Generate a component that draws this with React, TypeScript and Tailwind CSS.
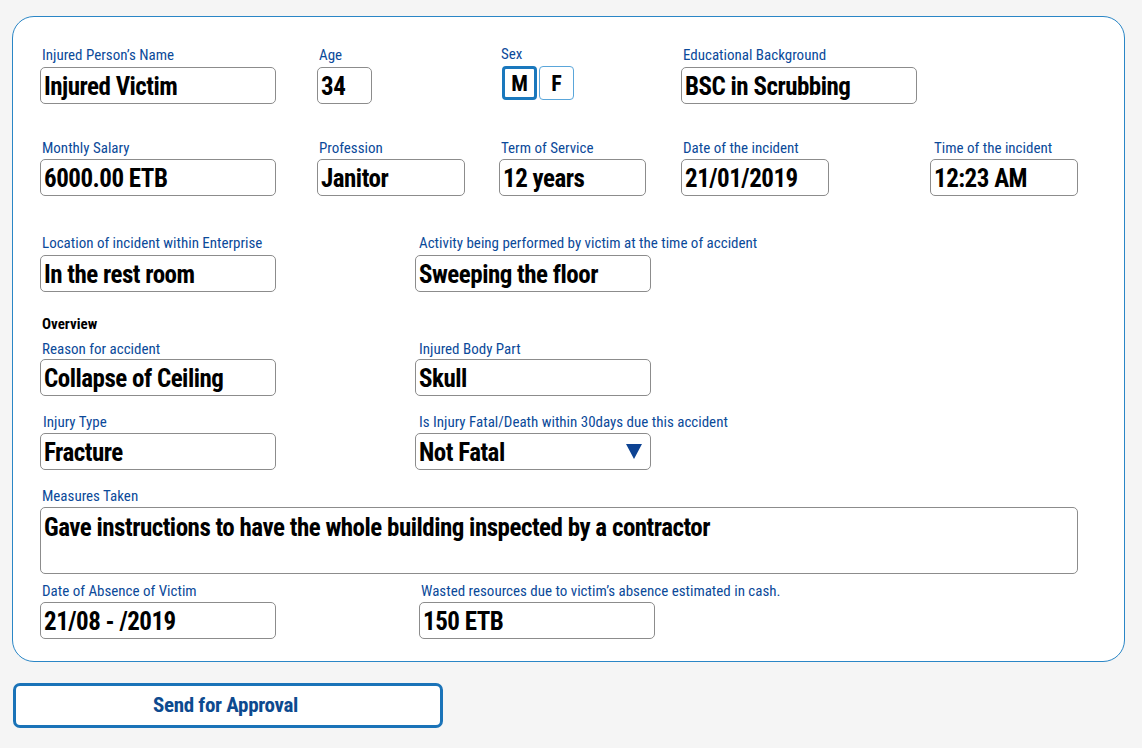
import React from 'react';

interface FieldProps {
    label: string;
    value: string;
    width: string;
    labelClass?: string;
    children?: React.ReactNode;
}

const Label: React.FC<{ text: string; className?: string }> = ({ text, className = '' }) => (
    <div className={`text-[15px] leading-[18px] text-[#0b4a9a] whitespace-nowrap ${className}`}>{text}</div>
);

const Field: React.FC<FieldProps> = ({ label, value, width, labelClass = 'mb-[3px] pl-[2px]', children }) => (
    <div className="flex flex-col">
        <Label text={label} className={labelClass} />
        <div
            className={`${width} h-[37px] border border-[#8c8c8c] rounded-[5px] bg-white flex items-center justify-between pl-[3px] pr-[8px] pt-[3px] text-[25px] tracking-[-0.5px] font-bold text-black whitespace-nowrap`}
        >
            <span>{value}</span>
            {children}
        </div>
    </div>
);

export default function App() {
    return (
        <div className="min-h-[748px] bg-[#f5f5f5] pt-[16px] px-[12px] font-['Roboto',sans-serif] font-stretch-condensed">
            {/* Form card */}
            <div className="w-[1113px] bg-white border border-[#2a86c6] rounded-[22px] pt-[29px] pb-[22px] pl-[27px]">
                {/* Row 1 */}
                <div className="grid grid-cols-[277px_182px_182px_249px_1fr] items-start">
                    <Field label="Injured Person’s Name" value="Injured Victim" width="w-[236px]" />
                    <Field label="Age" value="34" width="w-[55px]" />
                    <div className="flex flex-col">
                        <Label text="Sex" className="mb-[3px] -mt-[1px] pl-[2px]" />
                        <div className="flex gap-[2px] pl-[3px]">
                            <div className="w-[35px] h-[34px] border-[3px] border-[#1a78bd] rounded-[4px] flex items-center justify-center text-[22px] font-bold">M</div>
                            <div className="w-[35px] h-[34px] border border-[#5aa6da] rounded-[4px] flex items-center justify-center text-[22px] font-bold">F</div>
                        </div>
                    </div>
                    <Field label="Educational Background" value="BSC in Scrubbing" width="w-[236px]" />
                </div>

                {/* Row 2 */}
                <div className="grid grid-cols-[277px_182px_182px_249px_1fr] items-start mt-[35px]">
                    <Field label="Monthly Salary" value="6000.00 ETB" width="w-[236px]" labelClass="mb-[2px] pl-[2px]" />
                    <Field label="Profession" value="Janitor" width="w-[148px]" labelClass="mb-[2px] pl-[2px]" />
                    <Field label="Term of Service" value="12 years" width="w-[147px]" labelClass="mb-[2px] pl-[2px]" />
                    <Field label="Date of the incident" value="21/01/2019" width="w-[148px]" labelClass="mb-[2px] pl-[2px]" />
                    <Field label="Time of the incident" value="12:23 AM" width="w-[148px]" labelClass="mb-[2px] pl-[4px]" />
                </div>

                {/* Row 3 */}
                <div className="grid grid-cols-[375px_1fr] items-start mt-[38px]">
                    <Field label="Location of incident within Enterprise" value="In the rest room" width="w-[236px]" labelClass="mb-[3px] pl-[2px]" />
                    <Field label="Activity being performed by victim at the time of accident" value="Sweeping the floor" width="w-[236px]" labelClass="mb-[3px] pl-[4px]" />
                </div>

                <div className="mt-[23px] pl-[2px] text-[15px] leading-[18px] font-bold text-black">Overview</div>

                {/* Row 4 */}
                <div className="grid grid-cols-[375px_1fr] items-start mt-[7px]">
                    <Field label="Reason for accident" value="Collapse of Ceiling" width="w-[236px]" labelClass="mb-[1px] pl-[2px]" />
                    <Field label="Injured Body Part" value="Skull" width="w-[236px]" labelClass="mb-[1px] pl-[4px]" />
                </div>

                {/* Row 5 */}
                <div className="grid grid-cols-[375px_1fr] items-start mt-[17px]">
                    <Field label="Injury Type" value="Fracture" width="w-[236px]" labelClass="mb-[2px] pl-[3px]" />
                    <Field label="Is Injury Fatal/Death within 30days due this accident" value="Not Fatal" width="w-[236px]" labelClass="mb-[2px] pl-[4px]">
                        <svg width="16" height="15" viewBox="0 0 16 15" className="shrink-0 -mt-[3px]">
                            <polygon points="0,0 16,0 8,15" fill="#0d4393" />
                        </svg>
                    </Field>
                </div>

                {/* Measures taken */}
                <div className="mt-[17px]">
                    <Label text="Measures Taken" className="mb-[2px] pl-[2px]" />
                    <div className="w-[1038px] h-[67px] border border-[#8c8c8c] rounded-[5px] pl-[3px] pt-[4px] text-[25px] leading-[32px] tracking-[-0.5px] font-bold text-black">
                        Gave instructions to have the whole building inspected by a contractor
                    </div>
                </div>

                {/* Row 7 */}
                <div className="grid grid-cols-[379px_1fr] items-start mt-[8px]">
                    <Field label="Date of Absence of Victim" value="21/08 - /2019" width="w-[236px]" labelClass="mb-[2px] pl-[2px]" />
                    <Field label="Wasted resources due to victim’s absence estimated in cash." value="150 ETB" width="w-[236px]" labelClass="mb-[2px] pl-[2px] text-[14px]" />
                </div>
            </div>

            {/* Submit */}
            <button className="mt-[21px] ml-[1px] w-[430px] h-[45px] border-[3px] border-[#1a73b8] rounded-[7px] bg-white pr-[5px] text-[21px] tracking-[-0.3px] font-bold text-[#0d4a8f]">
                Send for Approval
            </button>
        </div>
    );
}
